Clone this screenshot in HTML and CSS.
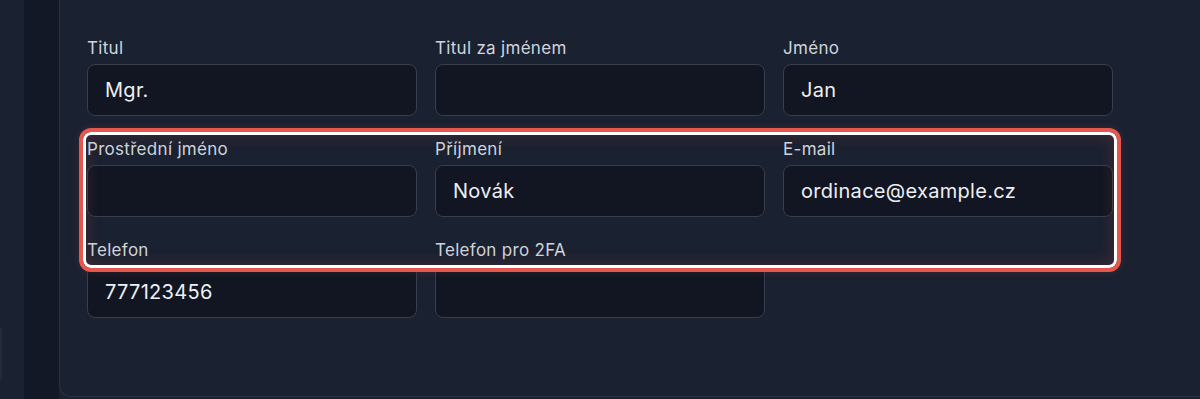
FILE: index.html
```html
<!DOCTYPE html>
<html lang="cs">
<head>
    <meta charset="UTF-8">
    <meta name="viewport" content="width=device-width, initial-scale=1.0">
    <title>Osobní údaje</title>
    <link rel="stylesheet" href="styles.css">
</head>
<body>

    <div class="sidebar-edge">
        <div class="sidebar-tab"></div>
    </div>

    <div class="card">
        <div class="fields">
            <div class="field">
                <label>Titul</label>
                <div class="input">Mgr.</div>
            </div>
            <div class="field">
                <label>Titul za jménem</label>
                <div class="input"></div>
            </div>
            <div class="field">
                <label>Jméno</label>
                <div class="input">Jan</div>
            </div>

            <div class="field">
                <label>Prostřední jméno</label>
                <div class="input"></div>
            </div>
            <div class="field">
                <label>Příjmení</label>
                <div class="input">Novák</div>
            </div>
            <div class="field">
                <label>E-mail</label>
                <div class="input">ordinace@example.cz</div>
            </div>

            <div class="field">
                <label>Telefon</label>
                <div class="input">777123456</div>
            </div>
            <div class="field">
                <label>Telefon pro 2FA</label>
                <div class="input"></div>
            </div>

            <!-- Highlight annotation -->
            <div class="highlight"></div>
        </div>
    </div>

</body>
</html>
```

FILE: styles.css
```css
body {
    margin: 0;
    height: 399px;
    overflow: hidden;
    display: flex;
    background-color: #1a2130;
    font-family: Inter, "Noto Sans", sans-serif;
    color: #eef0f3;
}
.sidebar-edge {
    width: 35px;
    margin-left: 24px;
    background-color: #121826;
    position: relative;
}
.sidebar-tab {
    position: absolute;
    left: -24px;
    top: 328px;
    width: 2px;
    height: 52px;
    background-color: #222b3a;
}
.card {
    flex: 1;
    background-color: #1a2131;
    border-left: 1px solid #2c3444;
    border-bottom: 1px solid #2c3444;
    border-bottom-left-radius: 12px;
    height: 397px;
    padding: 38px 0 0 27px;
    box-sizing: border-box;
}
.fields {
    position: relative; /* anchor for the highlight */
    display: grid;
    grid-template-columns: repeat(3, 330px);
    column-gap: 18px;
    row-gap: 23px;
}
.field label {
    display: block;
    font-size: 17px;
    line-height: 20px;
    letter-spacing: 0.3px;
    margin-bottom: 6px;
    color: #d0d4db;
}
.input {
    height: 52px;
    box-sizing: border-box;
    padding: 0 17px;
    display: flex;
    align-items: center;
    background-color: #111622;
    border: 1px solid #373e4c;
    border-radius: 8px;
    font-size: 20px;
    letter-spacing: 0.3px;
    color: #eef0f3;
}
.highlight {
    position: absolute;
    left: -8px;
    top: 90px;
    width: 1042px;
    height: 144px;
    box-sizing: border-box;
    border: 4px solid #e5574c;
    border-radius: 12px;
    box-shadow: inset 0 0 0 3px #ffffff, inset 0 0 16px 4px rgba(229, 87, 76, 0.18), 0 0 10px rgba(229, 87, 76, 0.15);
    pointer-events: none;
}
```
